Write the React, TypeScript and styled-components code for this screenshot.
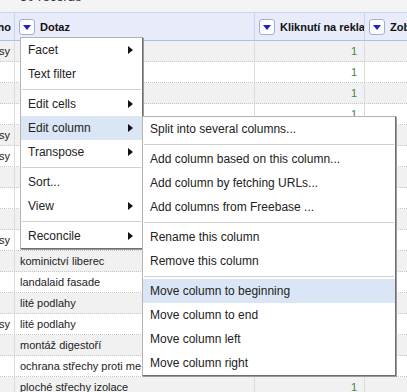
import React from 'react';
import styled, { createGlobalStyle } from 'styled-components';

const GlobalStyle = createGlobalStyle`
  html, body {
    margin: 0;
    padding: 0;
    background: #fff;
    overflow: hidden;
  }
  body {
    font-family: "Liberation Sans", Arial, sans-serif;
  }
`;

const Page = styled.div`
  position: relative;
  width: 407px;
  height: 392px;
  overflow: hidden;
`;

const TopBar = styled.div`
  height: 13px;
  overflow: hidden;
  background: #f4f4f4;
  padding-left: 20px;
`;

const RecordsText = styled.div`
  margin-top: -11px;
  font-size: 13px;
  line-height: 16px;
  color: #333;
`;

const HeaderRow = styled.div`
  display: flex;
  box-sizing: border-box;
  height: 29px;
  margin-top: -1px;
  background: #e8ebf9;
  border-top: 1px solid #c9d3f3;
  border-bottom: 1px solid #a9bff2;
`;

const HeadCell = styled.div<{ $w: number; $clip?: boolean }>`
  flex: 0 0 ${(p) => p.$w}px;
  box-sizing: border-box;
  display: flex;
  align-items: center;
  justify-content: ${(p) => (p.$clip ? 'flex-end' : 'flex-start')};
  gap: 5px;
  padding: ${(p) => (p.$clip ? '0 3px 0 0' : '0 0 0 4px')};
  border-right: 1px solid #c9d3f3;
  overflow: hidden;
  white-space: nowrap;
  font-size: 11px;
  font-weight: bold;
  color: #111;
`;

const DropButton = styled.span`
  flex: 0 0 auto;
  width: 16px;
  height: 16px;
  box-sizing: border-box;
  border: 1px solid #a3acdf;
  border-radius: 3px;
  background: #fff;
  display: flex;
  align-items: center;
  justify-content: center;

  &::after {
    content: '';
    width: 0;
    height: 0;
    border-left: 4px solid transparent;
    border-right: 4px solid transparent;
    border-top: 5px solid #1f22c4;
    margin-top: 1px;
  }
`;

const Row = styled.div<{ $odd: boolean }>`
  display: flex;
  height: 21px;
  box-sizing: border-box;
  background: ${(p) => (p.$odd ? '#fff' : '#f1f1f1')};
  border-bottom: 1px dotted #c8c8c8;
`;

const Cell = styled.div<{ $w: number; $align?: 'left' | 'right' | 'clip' }>`
  flex: 0 0 ${(p) => p.$w}px;
  box-sizing: border-box;
  display: flex;
  align-items: center;
  justify-content: ${(p) => (p.$align === 'left' ? 'flex-start' : 'flex-end')};
  padding: ${(p) =>
    p.$align === 'left' ? '0 0 0 5px' : p.$align === 'right' ? '0 7px 0 0' : '0 4px 0 0'};
  border-right: 1px solid #dcdcdc;
  overflow: hidden;
  white-space: nowrap;
  font-size: 11px;
  color: ${(p) => (p.$align === 'right' ? '#4a7f4a' : '#222')};
`;

const Menu = styled.div<{ $w: number }>`
  position: absolute;
  width: ${(p) => p.$w}px;
  box-sizing: border-box;
  background: #fff;
  border: 1px solid;
  border-color: #b4b4b4 #6f6f6f #6f6f6f #b4b4b4;
  box-shadow: 1px 1px 0 #9a9a9a;
  font-size: 12px;
  color: #222;
`;

const MainMenu = styled(Menu)`
  left: 20px;
  top: 37px;
`;

const SubMenu = styled(Menu)`
  left: 121px;
  top: 78px;
  z-index: 2;
`;

const Item = styled.div<{ $active?: boolean }>`
  display: flex;
  align-items: center;
  justify-content: space-between;
  height: 24px;
  padding: 0 9px 0 7px;
  background: ${(p) => (p.$active ? '#dae6f6' : 'transparent')};
  white-space: nowrap;
`;

const Arrow = styled.span`
  width: 0;
  height: 0;
  border-top: 4px solid transparent;
  border-bottom: 4px solid transparent;
  border-left: 5px solid #111;
`;

const Separator = styled.div`
  height: 1px;
  margin: 3px 1px 2px;
  background: #cfcfcf;
`;

const COLS = [14, 240, 110, 60];

// rows 0-9 of the query column and rows 4-15 of the clicks column sit under the menus
const rows: { key: string; query: string; clicks: string }[] = [
  { key: 'sy', query: '', clicks: '1' },
  { key: '', query: '', clicks: '1' },
  { key: '', query: '', clicks: '1' },
  { key: '', query: '', clicks: '1' },
  { key: 'sy', query: '', clicks: '' },
  { key: 'sy', query: '', clicks: '' },
  { key: '', query: '', clicks: '' },
  { key: '', query: '', clicks: '' },
  { key: '', query: '', clicks: '' },
  { key: 'sy', query: '', clicks: '' },
  { key: '', query: 'kominictví liberec', clicks: '' },
  { key: '', query: 'landalaid fasade', clicks: '' },
  { key: '', query: 'lité podlahy', clicks: '' },
  { key: 'sy', query: 'lité podlahy', clicks: '' },
  { key: '', query: 'montáž digestoří', clicks: '' },
  { key: '', query: 'ochrana střechy proti me', clicks: '' },
  { key: '', query: 'ploché střechy izolace', clicks: '1' },
];

type Entry = { label: string; sub?: boolean; active?: boolean } | 'sep';

const mainItems: Entry[] = [
  { label: 'Facet', sub: true },
  { label: 'Text filter' },
  'sep',
  { label: 'Edit cells', sub: true },
  { label: 'Edit column', sub: true, active: true },
  { label: 'Transpose', sub: true },
  'sep',
  { label: 'Sort...' },
  { label: 'View', sub: true },
  'sep',
  { label: 'Reconcile', sub: true },
];

const subItems: Entry[] = [
  { label: 'Split into several columns...' },
  'sep',
  { label: 'Add column based on this column...' },
  { label: 'Add column by fetching URLs...' },
  { label: 'Add columns from Freebase ...' },
  'sep',
  { label: 'Rename this column' },
  { label: 'Remove this column' },
  'sep',
  { label: 'Move column to beginning', active: true },
  { label: 'Move column to end' },
  { label: 'Move column left' },
  { label: 'Move column right' },
];

const renderEntries = (entries: Entry[]) =>
  entries.map((e, i) =>
    e === 'sep' ? (
      <Separator key={i} />
    ) : (
      <Item key={i} $active={e.active}>
        <span>{e.label}</span>
        {e.sub && <Arrow />}
      </Item>
    )
  );

const App = () => {
  return (
    <Page>
      <GlobalStyle />
      <TopBar>
        <RecordsText>30 records</RecordsText>
      </TopBar>
      <div>
        <HeaderRow>
          <HeadCell $w={COLS[0] + 1} $clip>
            ho
          </HeadCell>
          <HeadCell $w={COLS[1]}>
            <DropButton />
            Dotaz
          </HeadCell>
          <HeadCell $w={COLS[2]}>
            <DropButton />
            Kliknutí na rekla
          </HeadCell>
          <HeadCell $w={COLS[3]}>
            <DropButton />
            Zob
          </HeadCell>
        </HeaderRow>
        {rows.map((r, i) => (
          <Row key={i} $odd={i % 2 === 1}>
            <Cell $w={COLS[0] + 1} $align="clip">
              {r.key}
            </Cell>
            <Cell $w={COLS[1]} $align="left">
              {r.query}
            </Cell>
            <Cell $w={COLS[2]} $align="right">
              {r.clicks}
            </Cell>
            <Cell $w={COLS[3]} $align="left" />
          </Row>
        ))}
      </div>
      <MainMenu $w={123}>
        {renderEntries(mainItems)}
        <SubMenu $w={254}>{renderEntries(subItems)}</SubMenu>
      </MainMenu>
    </Page>
  );
};

export default App;
